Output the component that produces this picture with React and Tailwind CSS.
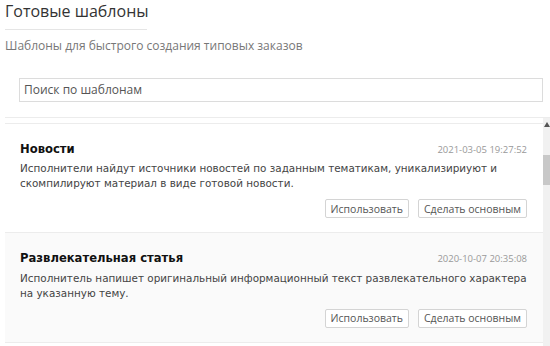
import React from 'react';

const templates = [
  {
    title: 'Новости',
    date: '2021-03-05 19:27:52',
    text: 'Исполнители найдут источники новостей по заданным тематикам, уникализириуют и скомпилируют материал в виде готовой новости.',
    bg: 'bg-white',
  },
  {
    title: 'Развлекательная статья',
    date: '2020-10-07 20:35:08',
    text: 'Исполнитель напишет оригинальный информационный текст развлекательного характера на указанную тему.',
    bg: 'bg-[#fafafa]',
  },
];

function SmallButton({ children }) {
  return (
    <button className="h-[19px] px-[5px] border border-[#d4d4d4] rounded-[2px] bg-white text-[10.5px] leading-none text-[#555] font-['Open_Sans',sans-serif]">
      {children}
    </button>
  );
}

function TemplateCard({ item }) {
  return (
    <div className={`${item.bg} border-b border-[#ececec] pl-[15px] pr-[16px] pt-[17px] pb-[14px]`}>
      <div className="flex items-baseline justify-between">
        <h3 className="text-[11.6px] font-bold text-[#111] font-['DejaVu_Sans',sans-serif]">{item.title}</h3>
        <span className="text-[9.5px] text-[#999] font-['Open_Sans',sans-serif]">{item.date}</span>
      </div>
      <p className="mt-[3px] text-[10.4px] leading-[15px] text-[#444] font-['DejaVu_Sans',sans-serif]">{item.text}</p>
      <div className="mt-[8px] flex justify-end gap-[9px]">
        <SmallButton>Использовать</SmallButton>
        <SmallButton>Сделать основным</SmallButton>
      </div>
    </div>
  );
}

export default function App() {
  return (
    <div className="w-[550px] h-[346px] overflow-hidden bg-white font-['Open_Sans',sans-serif] flex flex-col">
      <div className="pl-[5px]">
        <h1 className="text-[16px] leading-[22px] text-[#333] whitespace-nowrap">Готовые шаблоны</h1>
        <div className="mt-[7px] w-[142px] border-b border-[#e5e5e5]" />
        <p className="mt-[7px] text-[12px] leading-[18px] text-[#777]">Шаблоны для быстрого создания типовых заказов</p>
      </div>
      <div className="mt-[23px] pl-[19px] pr-[7px]">
        <div className="h-[24px] border border-[#dcdcdc] flex items-center px-[4px] text-[12px] text-[#555]">
          Поиск по шаблонам
        </div>
      </div>
      <div className="mt-[15px] ml-[5px] flex-1 flex min-h-0 border-t border-[#ececec]">
        <div className="flex-1 pt-[5px]">
          <div className="border-t border-[#ececec]">
            {templates.map((t) => (
              <TemplateCard key={t.title} item={t} />
            ))}
          </div>
        </div>
        <div className="w-[7px] bg-[#f1f1f1] flex flex-col items-center pt-[4px]">
          <svg width="6" height="5" viewBox="0 0 6 5" className="mb-[28px]">
            <path d="M0 5 L3 0 L6 5 Z" fill="#555" />
          </svg>
          <div className="w-[7px] h-[30px] bg-[#c8c8c8]" />
        </div>
      </div>
    </div>
  );
}
